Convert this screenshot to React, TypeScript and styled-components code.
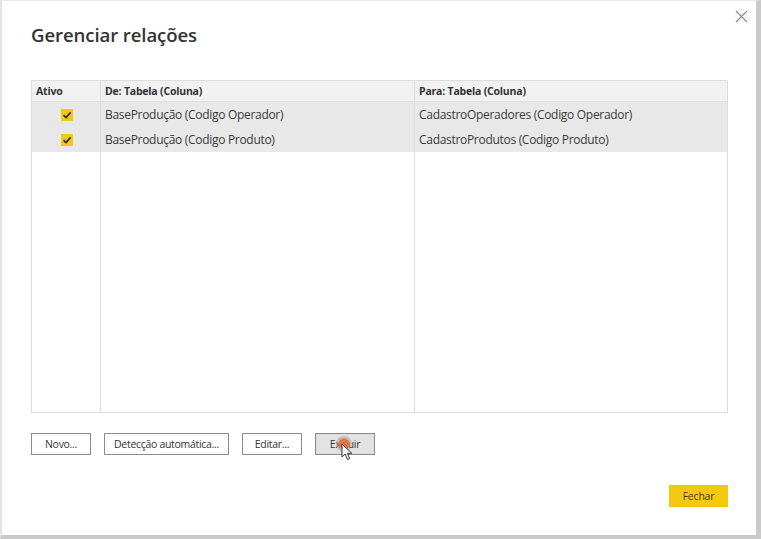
import React from "react";
import styled, { createGlobalStyle } from "styled-components";

const Global = createGlobalStyle`
  html, body { margin: 0; padding: 0; background: #ffffff; }
  body { font-family: "Open Sans", "Noto Sans", sans-serif; color: #333; }
`;

const Frame = styled.div`
  width: 761px;
  height: 539px;
  box-sizing: border-box;
  background: #ffffff;
  border-left: 2px solid #e4e4e4;
  border-top: 1px solid #e8e8e8;
  border-right: 5px solid #c9c9c9;
  border-bottom: 4px solid #c9c9c9;
  position: relative;
  display: flex;
  flex-direction: column;
  padding: 0 28px 0 29px;
`;

const CloseButton = styled.div`
  position: absolute;
  top: 8px;
  right: 8px;
  width: 14px;
  height: 14px;
  display: flex;
  align-items: center;
  justify-content: center;
`;

const Title = styled.h1`
  margin: 19px 0 0 0;
  font-size: 18.6px;
  font-weight: 600;
  color: #333;
  line-height: 30px;
  letter-spacing: -0.1px;
`;

const Table = styled.div`
  margin-top: 30px;
  height: 333px;
  box-sizing: border-box;
  border: 1px solid #dcdcdc;
  display: flex;
  flex-direction: column;
`;

const Row = styled.div<{ $kind: "head" | "data" | "fill" }>`
  display: grid;
  grid-template-columns: 69px 314px 1fr;
  height: ${(p) => (p.$kind === "head" ? "20px" : p.$kind === "data" ? "25px" : "auto")};
  flex: ${(p) => (p.$kind === "fill" ? "1" : "none")};
  background: ${(p) => (p.$kind === "head" ? "#f1f1f1" : p.$kind === "data" ? "#e8e8e8" : "#ffffff")};
  border-bottom: ${(p) => (p.$kind === "head" ? "1px solid #e0e0e0" : "none")};
`;

const Cell = styled.div<{ $head?: boolean; $center?: boolean }>`
  border-right: 1px solid #dcdcdc;
  display: flex;
  align-items: center;
  justify-content: ${(p) => (p.$center ? "center" : "flex-start")};
  padding-left: ${(p) => (p.$center ? "0" : "4px")};
  font-size: ${(p) => (p.$head ? "10.5px" : "12px")};
  letter-spacing: ${(p) => (p.$head ? "-0.2px" : "-0.3px")};
  font-weight: ${(p) => (p.$head ? 700 : 400)};
  color: ${(p) => (p.$head ? "#333" : "#3a3a3a")};
  white-space: nowrap;
  overflow: hidden;
  &:last-child { border-right: none; }
`;

const Check = styled.span`
  width: 12px;
  height: 12px;
  background: #f2c811;
  display: flex;
  align-items: center;
  justify-content: center;
  margin-left: 1px;
`;

const ButtonBar = styled.div`
  display: flex;
  gap: 13px;
  margin-top: 20px;
`;

const Button = styled.div<{ $w: number; $hover?: boolean }>`
  position: relative;
  width: ${(p) => p.$w}px;
  height: 22px;
  box-sizing: border-box;
  border: 1px solid #8c8c8c;
  box-shadow: inset 0 0 0 1px ${(p) => (p.$hover ? "#dcdcdc" : "#ffffff")};
  background: ${(p) => (p.$hover ? "#e3e3e3" : "#ffffff")};
  display: flex;
  align-items: center;
  justify-content: center;
  font-size: 10.5px;
  letter-spacing: -0.3px;
  color: #333;
`;

const Footer = styled.div`
  display: flex;
  justify-content: flex-end;
  margin-top: 30px;
`;

const PrimaryButton = styled.div`
  width: 59px;
  height: 22px;
  background: #f2c811;
  display: flex;
  align-items: center;
  justify-content: center;
  font-size: 10.5px;
  letter-spacing: -0.2px;
  color: #4a3a20;
`;

const ClickDot = styled.div`
  position: absolute;
  left: 20px;
  top: 2px;
  width: 16px;
  height: 16px;
  border-radius: 50%;
  background: radial-gradient(circle, #e8743b 0 5px, rgba(150,150,150,0.45) 6px 8px);
`;

const Cursor = styled.svg`
  position: absolute;
  left: 25px;
  top: 9px;
`;

const rows = [
  { from: "BaseProdução (Codigo Operador)", to: "CadastroOperadores (Codigo Operador)" },
  { from: "BaseProdução (Codigo Produto)", to: "CadastroProdutos (Codigo Produto)" },
];

export default function App() {
  return (
    <>
      <Global />
      <Frame>
        <CloseButton>
          <svg width="13" height="13" viewBox="0 0 13 13">
            <path d="M1 1 L12 12 M12 1 L1 12" stroke="#8a8a8a" strokeWidth="1.1" />
          </svg>
        </CloseButton>
        <Title>Gerenciar relações</Title>
        <Table>
          <Row $kind="head">
            <Cell $head>Ativo</Cell>
            <Cell $head>De: Tabela (Coluna)</Cell>
            <Cell $head>Para: Tabela (Coluna)</Cell>
          </Row>
          {rows.map((r) => (
            <Row $kind="data" key={r.from}>
              <Cell $center>
                <Check>
                  <svg width="10" height="10" viewBox="0 0 10 10">
                    <path d="M1.5 5.2 L4 7.6 L8.6 2.4" stroke="#2b2b2b" strokeWidth="1.6" fill="none" />
                  </svg>
                </Check>
              </Cell>
              <Cell>{r.from}</Cell>
              <Cell>{r.to}</Cell>
            </Row>
          ))}
          <Row $kind="fill">
            <Cell />
            <Cell />
            <Cell />
          </Row>
        </Table>
        <ButtonBar>
          <Button $w={60}>Novo...</Button>
          <Button $w={125}>Detecção automática...</Button>
          <Button $w={60}>Editar...</Button>
          <Button $w={60} $hover>
            Excluir
            <ClickDot />
            <Cursor width="14" height="18" viewBox="0 0 14 18">
              <path d="M1 1 L1 14 L4.2 11 L6.5 16.5 L8.6 15.6 L6.4 10.3 L10.8 10.3 Z" fill="#ffffff" stroke="#333" strokeWidth="1" />
            </Cursor>
          </Button>
        </ButtonBar>
        <Footer>
          <PrimaryButton>Fechar</PrimaryButton>
        </Footer>
      </Frame>
    </>
  );
}
